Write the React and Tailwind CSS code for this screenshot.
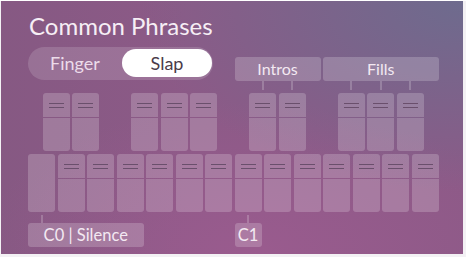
import React from "react";

const font = { fontFamily: "Lato, 'Noto Sans', sans-serif" };

function Lines() {
  return (
    <div className="flex flex-col items-center gap-[3px] pt-[10px]">
      <div className="h-px w-[15px] bg-[#6a4f6c]" />
      <div className="h-px w-[15px] bg-[#6a4f6c]" />
    </div>
  );
}

function Key({ plain }) {
  if (plain) {
    return <div className="h-[58px] w-[27px] rounded-[3px] bg-white/20" />;
  }
  return (
    <div className="flex h-[58px] w-[27px] flex-col gap-px">
      <div className="h-[24px] rounded-t-[3px] bg-white/20">
        <Lines />
      </div>
      <div className="flex-1 rounded-b-[3px] bg-white/20" />
    </div>
  );
}

const blackSlots = [1, 1, 0, 1, 1, 1, 0, 1, 1, 0, 1, 1, 1];
const connSlots = [0, 0, 0, 0, 0, 0, 0, 1, 1, 0, 1, 1, 1];

export default function App() {
  return (
    <div className="h-[257px] w-[466px] bg-[#f3f1f4]" style={font}>
      <div className="ml-px mt-px h-[253px] w-[462px] overflow-hidden bg-[#8c5a87] bg-[radial-gradient(ellipse_70%_75%_at_100%_0%,rgba(108,108,142,0.95),rgba(108,108,142,0)_100%),radial-gradient(ellipse_60%_60%_at_55%_100%,rgba(165,92,148,0.55),rgba(165,92,148,0)_100%),linear-gradient(90deg,rgba(130,88,128,0.6),rgba(130,88,128,0)_40%)] pl-[27px] pt-[12px]">
        <div className="pl-[1px] text-[24px] leading-[26px] text-[#f6eef5]">Common Phrases</div>

        <div className="mt-[8px] flex items-start">
          <div className="flex h-[33px] w-[185px] items-start rounded-full bg-white/15 pr-[1px] pt-[2px]">
            <div className="flex h-[28px] flex-1 items-center justify-center text-[18px] text-[#ecdcea]">Finger</div>
            <div className="flex h-[28px] w-[90px] items-center justify-center rounded-full bg-white text-[18px] text-[#4a3b49]">Slap</div>
          </div>
          <div className="ml-[21.5px] mt-[10px] flex gap-[2.5px]">
            <div className="flex h-[24px] w-[86px] items-center justify-center rounded-[3px] bg-white/20 text-[16px] text-[#f3e9f2]">Intros</div>
            <div className="flex h-[24px] w-[115.5px] items-center justify-center rounded-[3px] bg-white/20 text-[16px] text-[#f3e9f2]">Fills</div>
          </div>
        </div>

        <div className="flex h-[9px] gap-[2.5px] pl-[14.75px]">
          {connSlots.map((c, i) => (
            <div key={i} className="flex w-[27px] justify-center">
              {c ? <div className="h-[9px] w-[2px] bg-white/20" /> : null}
            </div>
          ))}
        </div>

        <div className="mt-[3px] flex gap-[2.5px] pl-[14.75px]">
          {blackSlots.map((b, i) =>
            b ? <Key key={i} /> : <div key={i} className="w-[27px]" />
          )}
        </div>

        <div className="mt-[3px] flex gap-[2.5px]">
          {Array.from({ length: 14 }).map((_, i) => (
            <Key key={i} plain={i === 0} />
          ))}
        </div>

        <div className="mt-[3px] flex h-[8px] gap-[2.5px]">
          {Array.from({ length: 14 }).map((_, i) => (
            <div key={i} className="flex w-[27px] justify-center">
              {i === 0 || i === 7 ? <div className="h-[8px] w-[2px] bg-white/20" /> : null}
            </div>
          ))}
        </div>

        <div className="flex gap-[2.5px]">
          <div className="flex h-[24px] w-[115.5px] items-center justify-center rounded-[3px] bg-white/20 text-[16.5px] text-[#f3e9f2]">C0 | Silence</div>
          <div className="ml-[88.5px] flex h-[24px] w-[27px] items-center justify-center rounded-[3px] bg-white/20 text-[16.5px] text-[#f3e9f2]">C1</div>
        </div>
      </div>
    </div>
  );
}
